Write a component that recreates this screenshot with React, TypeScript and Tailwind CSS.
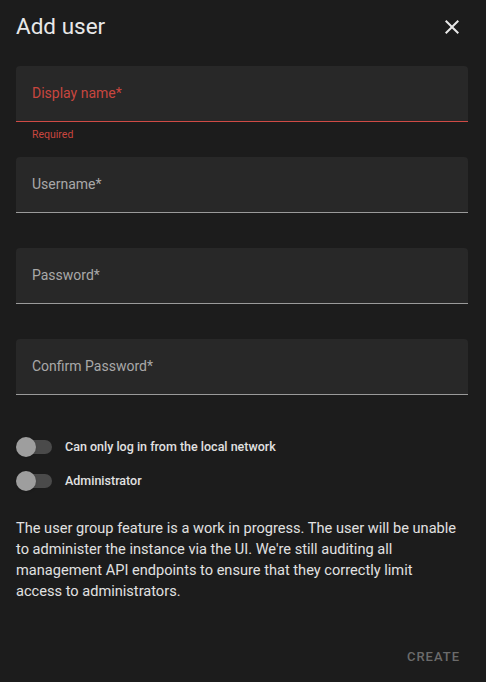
import React, { useState } from 'react';

const fieldNames = ['Username*', 'Password*', 'Confirm Password*'];

const Toggle: React.FC<{ label: string }> = ({ label }) => {
  const [on, setOn] = useState(false);
  return (
    <label className="flex items-center h-[34px] cursor-pointer" onClick={() => setOn(!on)}>
      <span className="relative w-[36px] h-[20px] flex items-center">
        <span className="absolute left-[4px] w-[32px] h-[14px] rounded-full bg-[#4a4a4a]" />
        <span className={`absolute left-0 w-[20px] h-[20px] rounded-full bg-[#9e9e9e] shadow ${on ? 'translate-x-[16px]' : ''}`} />
      </span>
      <span className="ml-[13px] text-[12.5px] font-medium text-[#e1e1e1]">{label}</span>
    </label>
  );
};

export default function App() {
  return (
    <div className="w-[486px] h-[682px] bg-[#1c1c1c] text-[#e1e1e1] flex flex-col pl-4 pr-[18px]" style={{ fontFamily: 'Roboto, "Liberation Sans", sans-serif' }}>
      {/* header */}
      <div className="flex items-center justify-between h-[54px]">
        <h2 className="text-[22.5px] font-normal text-[#e8e8e8]">Add user</h2>
        <button className="w-6 h-6 flex items-center justify-center mr-[4px] text-[#e8e8e8]">
          <svg viewBox="0 0 24 24" width="24" height="24" fill="currentColor">
            <path d="M19 6.41L17.59 5 12 10.59 6.41 5 5 6.41 10.59 12 5 17.59 6.41 19 12 13.41 17.59 19 19 17.59 13.41 12z" />
          </svg>
        </button>
      </div>

      <div className="mt-[12px]">
        <div className="h-[56px] bg-[#282828] rounded-t-[4px] border-b border-[#cf4a45] flex items-center px-4">
          <span className="text-[14px] text-[#c9463f]">Display name*</span>
        </div>
        <div className="h-[35px] px-4 pt-[5px] text-[10.5px] text-[#c9463f]">Required</div>
      </div>

      {fieldNames.map(n => (
        <div key={n}>
          <div className="h-[56px] bg-[#282828] rounded-t-[4px] border-b border-[#9a9a9a] flex items-center px-4">
            <span className="text-[14px] text-[#a8a8a8]">{n}</span>
          </div>
          <div className="h-[35px]" />
        </div>
      ))}

      <div>
        <Toggle label="Can only log in from the local network" />
        <Toggle label="Administrator" />
      </div>

      <p className="mt-[20px] text-[14.6px] leading-[21px] text-[#e1e1e1] pr-[2px]">
        The user group feature is a work in progress. The user will be unable to administer the instance via the UI. We're still auditing all management API endpoints to ensure that they correctly limit
        <br />
        access to administrators.
      </p>

      <div className="flex-1" />
      <div className="flex justify-end pb-[16px] pr-[8px]">
        <button className="text-[13px] font-medium tracking-[1px] text-[#6b6b6b]">CREATE</button>
      </div>
    </div>
  );
}
